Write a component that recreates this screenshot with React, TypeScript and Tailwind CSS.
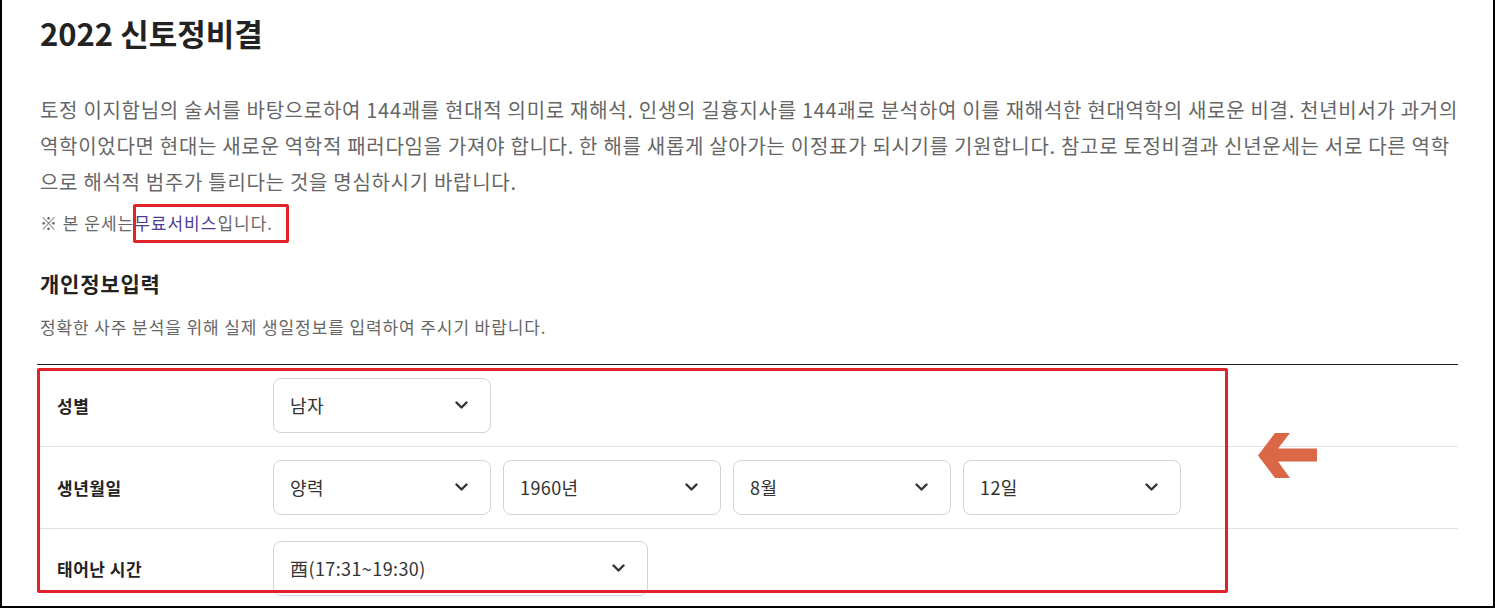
import React from "react";

const FONT = { fontFamily: "'Noto Sans CJK KR', 'Noto Sans', sans-serif" };

function Chevron() {
  return (
    <svg width="13" height="9" viewBox="0 0 13 9" className="shrink-0">
      <polyline points="1.5,1.5 6.5,6.5 11.5,1.5" fill="none" stroke="#333" strokeWidth="2.4" strokeLinecap="round" strokeLinejoin="round" />
    </svg>
  );
}

function Select({ value, w = "w-[218px]" }: { value: string; w?: string }) {
  return (
    <div className={`${w} h-[55px] rounded-[8px] border border-[#d4d4d4] flex items-center justify-between pl-[16px] pr-[22px] text-[18px] tracking-[0.4px] text-[#333] bg-white`}>
      <span>{value}</span>
      <Chevron />
    </div>
  );
}

function Row({ label, children, last }: { label: string; children: React.ReactNode; last?: boolean }) {
  return (
    <div className={`flex h-[82px] ${last ? "items-start pt-[12px]" : "items-center border-b border-[#e3e3e3]"}`}>
      <div className={`w-[236px] pl-[20px] text-[17px] tracking-[0.5px] font-bold text-[#222] ${last ? "pt-[15px]" : ""}`}>{label}</div>
      <div className="flex gap-3">{children}</div>
    </div>
  );
}

export default function App() {
  return (
    <div style={FONT} className="relative w-[1495px] h-[608px] overflow-hidden bg-white border-l-2 border-r-2 border-b-2 border-black">
      <div className="ml-[35px] w-[1421px]">
        <h1 className="pt-[13px] pl-[3px] h-[53px] leading-[40px] text-[31px] font-bold text-[#222]">2022 신토정비결</h1>
        <div className="mt-[39px] pl-[3px] text-[20px] tracking-[0.7px] leading-[36px] text-[#666] whitespace-nowrap">
          <div>토정 이지함님의 술서를 바탕으로하여 144괘를 현대적 의미로 재해석. 인생의 길흉지사를 144괘로 분석하여 이를 재해석한 현대역학의 새로운 비결. 천년비서가 과거의</div>
          <div>역학이었다면 현대는 새로운 역학적 패러다임을 가져야 합니다. 한 해를 새롭게 살아가는 이정표가 되시기를 기원합니다. 참고로 토정비결과 신년운세는 서로 다른 역학</div>
          <div>으로 해석적 범주가 틀리다는 것을 명심하시기 바랍니다.</div>
        </div>
        <p className="mt-[11px] pl-[3px] text-[17px] tracking-[1px] leading-[24px] text-[#666]">
          ※ 본 운세는<span className="text-[#4b3d8f]">무료서비스</span>입니다.
        </p>
        <h2 className="mt-[33px] pl-[3px] text-[21px] tracking-[0.8px] leading-[30px] font-bold text-[#222]">개인정보입력</h2>
        <p className="mt-[18px] pl-[3px] text-[17px] tracking-[0.9px] leading-[22px] text-[#666]">정확한 사주 분석을 위해 실제 생일정보를 입력하여 주시기 바랍니다.</p>
        <div className="mt-[26px] border-t border-[#222]">
          <Row label="성별">
            <Select value="남자" />
          </Row>
          <Row label="생년월일">
            <Select value="양력" />
            <Select value="1960년" />
            <Select value="8월" />
            <Select value="12일" />
          </Row>
          <Row label="태어난 시간" last>
            <Select value="酉(17:31~19:30)" w="w-[375px]" />
          </Row>
        </div>
      </div>

      {/* annotation overlays */}
      <div className="absolute left-[131px] top-[204px] w-[156px] h-[39px] border-[3px] border-[#e0222b] rounded-[2px]" />
      <div className="absolute left-[35px] top-[368px] w-[1191px] h-[225px] border-[3px] border-[#e0222b] rounded-[2px]" />
      <svg className="absolute left-[1256px] top-[433px]" width="60" height="45" viewBox="0 0 60 45">
        <polygon points="0,22.5 17,0 32,0 20,15.5 59,15.5 59,28.5 20,28.5 32,45 17,45" fill="#da6745" />
      </svg>
    </div>
  );
}
